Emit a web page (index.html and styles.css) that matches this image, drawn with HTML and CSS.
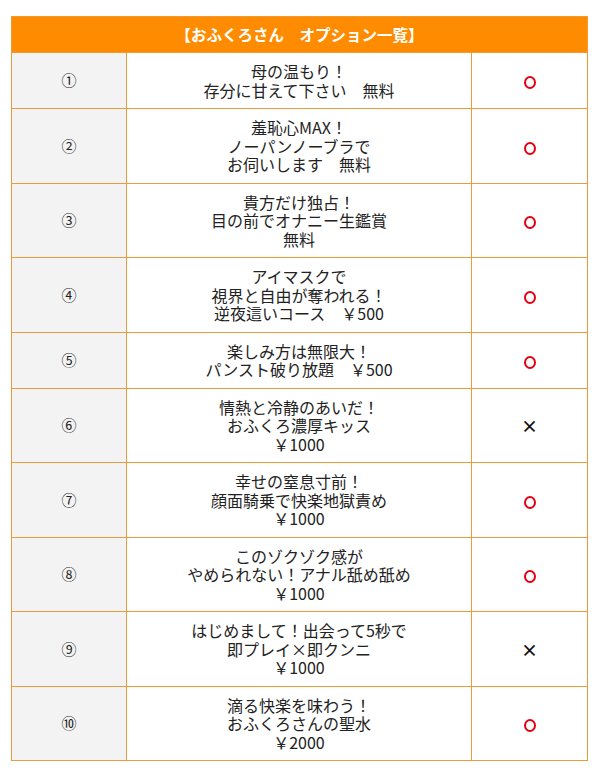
FILE: index.html
```html
<!DOCTYPE html>
<html lang="ja">
<head>
<meta charset="utf-8">
<link rel="stylesheet" href="styles.css">
</head>
<body>
<table class="opt">
  <colgroup><col class="c1"><col class="c2"><col class="c3"></colgroup>
  <thead>
    <tr><th colspan="3">【おふくろさん　オプション一覧】</th></tr>
  </thead>
  <tbody>
    <tr><td class="num">①</td><td class="desc">母の温もり！<br>存分に甘えて下さい　無料</td><td class="mark"><span class="ok"></span></td></tr>
    <tr><td class="num">②</td><td class="desc">羞恥心MAX！<br>ノーパンノーブラで<br>お伺いします　無料</td><td class="mark"><span class="ok"></span></td></tr>
    <tr><td class="num">③</td><td class="desc">貴方だけ独占！<br>目の前でオナニー生鑑賞<br>無料</td><td class="mark"><span class="ok"></span></td></tr>
    <tr><td class="num">④</td><td class="desc">アイマスクで<br>視界と自由が奪われる！<br>逆夜這いコース　￥500</td><td class="mark"><span class="ok"></span></td></tr>
    <tr><td class="num">⑤</td><td class="desc">楽しみ方は無限大！<br>パンスト破り放題　￥500</td><td class="mark"><span class="ok"></span></td></tr>
    <tr><td class="num">⑥</td><td class="desc">情熱と冷静のあいだ！<br>おふくろ濃厚キッス<br>￥1000</td><td class="mark"><span class="ng">×</span></td></tr>
    <tr><td class="num">⑦</td><td class="desc">幸せの窒息寸前！<br>顔面騎乗で快楽地獄責め<br>￥1000</td><td class="mark"><span class="ok"></span></td></tr>
    <tr><td class="num">⑧</td><td class="desc">このゾクゾク感が<br>やめられない！アナル舐め舐め<br>￥1000</td><td class="mark"><span class="ok"></span></td></tr>
    <tr><td class="num">⑨</td><td class="desc">はじめまして！出会って5秒で<br>即プレイ×即クンニ<br>￥1000</td><td class="mark"><span class="ng">×</span></td></tr>
    <tr><td class="num">⑩</td><td class="desc">滴る快楽を味わう！<br>おふくろさんの聖水<br>￥2000</td><td class="mark"><span class="ok"></span></td></tr>
  </tbody>
</table>
</body>
</html>
```

FILE: styles.css
```css
html, body {
  margin: 0;
  padding: 0;
  background: #fff;
}
body {
  padding: 16px 11px;
  font-family: "Noto Sans CJK JP", "Noto Sans", sans-serif;
  color: #222;
}
.opt {
  width: 576px;
  border-collapse: collapse;
  table-layout: fixed;
  font-size: 16px;
  line-height: 18.5px;
}
.c1 { width: 115px; }
.c2 { width: 345px; }
.c3 { width: 116px; }
.opt th {
  background: #ff8c00;
  color: #fff;
  font-weight: bold;
  font-size: 15.5px;
  height: 17px;
  padding: 9px 0;
  border: 1px solid #f09a30;
  text-align: center;
  line-height: 17px;
}
.opt td {
  border: 1px solid #ec9a3a;
  padding: 9px 0;
  text-align: center;
  vertical-align: middle;
}
.opt td.num {
  background: #f3f3f3;
  font-size: 15px;
}
.ok {
  display: inline-block;
  width: 8px;
  height: 9px;
  border: 2.5px solid #e60012;
  border-radius: 50%;
  vertical-align: middle;
}
.ng {
  display: inline-block;
  font-size: 17px;
  font-weight: bold;
  color: #111;
  vertical-align: middle;
}
```
